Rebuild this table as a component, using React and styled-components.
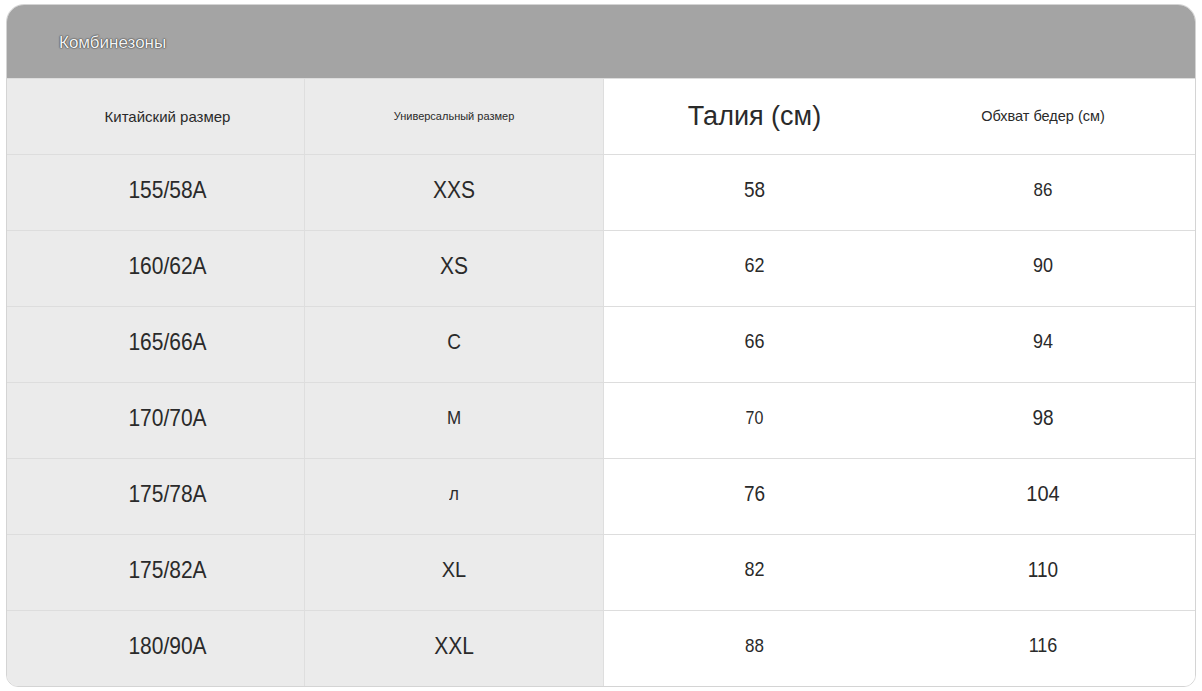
import React from "react";
import styled, { createGlobalStyle } from "styled-components";

const GlobalStyle = createGlobalStyle`
  * { box-sizing: border-box; }
  body {
    margin: 0;
    background: #ffffff;
    font-family: "Liberation Sans", Arial, sans-serif;
    color: #2b2b2b;
  }
`;

const headers = [
  { text: "Китайский размер", size: 15 },
  { text: "Универсальный размер", size: 11 },
  { text: "Талия (см)", size: 27 },
  { text: "Обхват бедер (см)", size: 14.5 },
];

// [value, font size] per column
const rows = [
  [["155/58A", 21], ["XXS", 21], ["58", 19], ["86", 17]],
  [["160/62A", 21], ["XS", 21], ["62", 18], ["90", 18]],
  [["165/66A", 21], ["C", 19], ["66", 18], ["94", 18]],
  [["170/70A", 21], ["M", 17], ["70", 16], ["98", 19]],
  [["175/78A", 21], ["л", 17], ["76", 19], ["104", 20]],
  [["175/82A", 21], ["XL", 20], ["82", 18], ["110", 19]],
  [["180/90A", 21], ["XXL", 21], ["88", 17], ["116", 18]],
];

const App = () => {
  return (
    <Page>
      <GlobalStyle />
      <Card>
        <TitleBar>
          <Title>Комбинезоны</Title>
        </TitleBar>
        <Row>
          {headers.map((h, i) => (
            <Cell key={i} $col={i} $size={h.size} $head>
              {h.text}
            </Cell>
          ))}
        </Row>
        {rows.map((row, r) => (
          <Row key={r}>
            {row.map(([value, size], i) => (
              <Cell key={i} $col={i} $size={size}>
                <Value>{value}</Value>
              </Cell>
            ))}
          </Row>
        ))}
      </Card>
    </Page>
  );
};
export default App;

const Page = styled.div`
  padding: 4px 7px 0 6px;
`;

const Card = styled.div`
  width: 1190px;
  border: 1px solid #d4d4d4;
  border-radius: 18px 18px 12px 12px;
  overflow: hidden;
  background: #ffffff;
`;

const TitleBar = styled.div`
  height: 73px;
  background: #a4a4a4;
  display: flex;
  align-items: center;
  padding: 2px 0 0 52px;
`;

const Title = styled.span`
  font-size: 17px;
  color: #f4f4f4;
  text-shadow: 0 0 1px #3e3e3e, 0 0 1px #3e3e3e, 0 0 2px #555555;
`;

const Row = styled.div`
  display: grid;
  grid-template-columns: 298px 299px 301px 1fr;
  height: 76px;
  border-top: 1px solid #dddddd;
  &:first-of-type {
    border-top: none;
  }
`;

const Cell = styled.div`
  display: flex;
  align-items: center;
  justify-content: center;
  padding-bottom: ${(p) => (p.$head ? "1px" : "6px")};
  font-size: ${(p) => p.$size}px;
  color: #2a2a2a;
  background: ${(p) => (p.$col < 2 ? "#ebebeb" : "#ffffff")};
  border-right: ${(p) => (p.$col < 2 ? "1px solid #dedede" : "none")};
  padding-left: ${(p) => (p.$col === 0 ? "24px" : "0")};
  padding-right: ${(p) => (p.$col === 3 ? "14px" : "0")};
`;

const Value = styled.span`
  display: inline-block;
  transform: scaleY(1.12);
`;
